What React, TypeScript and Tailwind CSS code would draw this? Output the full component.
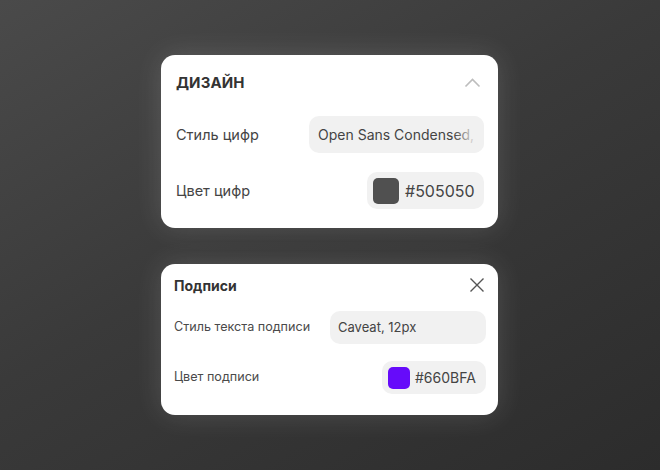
import { ReactNode } from "react";

function Swatch({ color, size }: { color: string; size: string }) {
  return <div className={`${size} rounded-[5px]`} style={{ backgroundColor: color }} />;
}

function Card({ children, className }: { children: ReactNode; className: string }) {
  return (
    <div className={`w-[337px] rounded-[14px] bg-white shadow-[0_0_28px_rgba(255,255,255,0.14)] ${className}`}>
      {children}
    </div>
  );
}

export default function App() {
  return (
    <div
      className="w-[660px] h-[470px] overflow-hidden flex flex-col items-start pl-[161px] pt-[55px] gap-[36px] bg-[linear-gradient(150deg,#4a4a4a_0%,#3a3a3a_45%,#2c2c2c_100%)]"
      style={{ fontFamily: "Inter, 'Noto Sans', sans-serif" }}
    >
      {/* Design panel */}
      <Card className="h-[173px] pl-[15px] pr-[14px] pt-[17px]">
        <div className="flex items-center justify-between h-[22px]">
          <span className="text-[15px] font-bold text-[#333] tracking-[0.1px]">ДИЗАЙН</span>
          <svg width="17" height="10" viewBox="0 0 17 10" className="mr-[3px]">
            <path d="M1.5 8.5 L8.5 1.5 L15.5 8.5" fill="none" stroke="#bdbdbd" strokeWidth="1.6" />
          </svg>
        </div>
        <div className="flex items-center justify-between mt-[22px]">
          <span className="text-[14.5px] text-[#444]">Стиль цифр</span>
          <div className="relative w-[175px] h-[37px] rounded-[10px] bg-[#f1f1f1] overflow-hidden flex items-center pl-[9px]">
            <span className="text-[14px] text-[#444] whitespace-nowrap">Open Sans Condensed, 16px</span>
            <div className="absolute right-0 top-0 h-full w-[30px] bg-[linear-gradient(90deg,rgba(241,241,241,0)_0%,#f1f1f1_75%)]" />
          </div>
        </div>
        <div className="flex items-center justify-between mt-[19px]">
          <span className="text-[14.5px] text-[#444]">Цвет цифр</span>
          <div className="w-[117px] h-[37px] rounded-[10px] bg-[#f1f1f1] flex items-center pl-[6px] gap-[6px]">
            <Swatch color="#505050" size="w-[26px] h-[26px]" />
            <span className="text-[16px] text-[#444]">#505050</span>
          </div>
        </div>
      </Card>

      {/* Captions panel */}
      <Card className="h-[151px] pl-[13px] pr-[12px] pt-[11px]">
        <div className="flex items-center justify-between h-[20px]">
          <span className="text-[14px] font-bold text-[#333]">Подписи</span>
          <svg width="16" height="16" viewBox="0 0 16 16" className="mr-[1px]">
            <path d="M1.5 1.5 L14.5 14.5 M14.5 1.5 L1.5 14.5" fill="none" stroke="#555" strokeWidth="1.4" />
          </svg>
        </div>
        <div className="flex items-center justify-between mt-[16px]">
          <span className="text-[12.6px] text-[#4a4a4a]">Стиль текста подписи</span>
          <div className="w-[156px] h-[33px] rounded-[10px] bg-[#f1f1f1] flex items-center pl-[8px]">
            <span className="text-[13px] text-[#444]">Caveat, 12px</span>
          </div>
        </div>
        <div className="flex items-center justify-between mt-[17px]">
          <span className="text-[12.6px] text-[#4a4a4a]">Цвет подписи</span>
          <div className="w-[104px] h-[33px] rounded-[10px] bg-[#f1f1f1] flex items-center pl-[6px] gap-[5px]">
            <Swatch color="#660BFA" size="w-[22px] h-[22px]" />
            <span className="text-[14px] text-[#444]">#660BFA</span>
          </div>
        </div>
      </Card>
    </div>
  );
}
